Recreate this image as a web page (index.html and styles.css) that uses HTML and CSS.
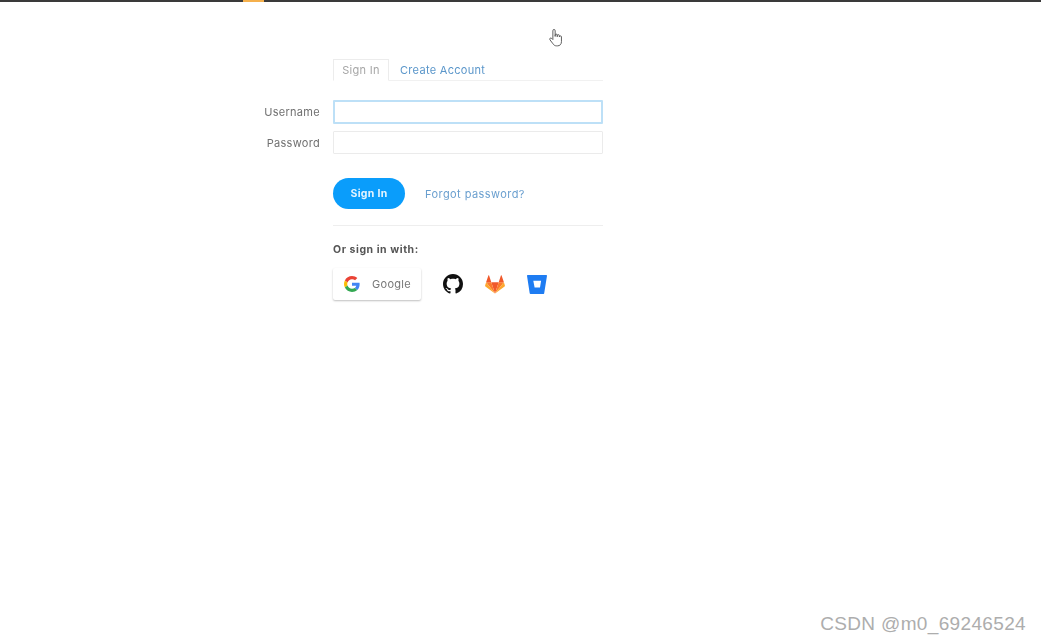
FILE: index.html
```html
<!DOCTYPE html>
<html lang="en">
<head>
<meta charset="utf-8">
<title>Sign In</title>
<link rel="stylesheet" href="styles.css">
</head>
<body>
<div class="topbar"><span class="topbar-accent"></span></div>
<main class="page">
  <nav class="tabs">
    <a class="tab tab-active">Sign In</a>
    <a class="tab tab-link">Create Account</a>
  </nav>
  <form class="form">
    <label class="field">
      <span class="field-label">Username</span>
      <span class="input input-focus"></span>
    </label>
    <label class="field">
      <span class="field-label">Password</span>
      <span class="input"></span>
    </label>
    <div class="actions">
      <span class="button-primary">Sign In</span>
      <a class="forgot">Forgot password?</a>
    </div>
    <div class="providers">
      <div class="providers-title">Or sign in with:</div>
      <div class="providers-row">
        <span class="google">
          <svg class="icon-g" viewBox="0 0 48 48" width="16" height="16"><path fill="#EA4335" d="M24 9.5c3.5 0 6.700 1.200 9.200 3.600l6.900-6.900C35.900 2.400 30.500 0 24 0 14.600 0 6.500 5.400 2.600 13.200l8 6.200C12.500 13.700 17.800 9.500 24 9.500z"/><path fill="#4285F4" d="M46.900 24.500c0-1.600-.1-3.100-.4-4.500H24v9h12.900c-.6 3-2.200 5.500-4.800 7.200l7.700 6c4.500-4.200 7.100-10.300 7.100-17.700z"/><path fill="#FBBC05" d="M10.500 28.600c-.5-1.400-.8-3-.8-4.600s.3-3.200.8-4.600l-8-6.200C.9 16.500 0 20.100 0 24s.9 7.500 2.600 10.800l7.900-6.200z"/><path fill="#34A853" d="M24 48c6.500 0 11.900-2.100 15.900-5.800l-7.700-6c-2.200 1.400-4.900 2.300-8.200 2.300-6.200 0-11.500-4.200-13.400-9.900l-8 6.200C6.500 42.600 14.600 48 24 48z"/></svg>
          <span class="google-text">Google</span>
        </span>
        <svg class="provider provider-github" viewBox="0 0 16 16" width="20" height="20"><path fill="#111" d="M8 0C3.580 0 0 3.580 0 8c0 3.540 2.290 6.530 5.470 7.590.4.070.55-.17.55-.38 0-.19-.01-.82-.01-1.490-2.010.37-2.530-.49-2.690-.94-.09-.23-.48-.94-.82-1.130-.28-.15-.68-.52-.01-.53.63-.01 1.080.58 1.230.82.720 1.210 1.870.87 2.330.66.070-.52.280-.87.510-1.070-1.780-.2-3.640-.89-3.640-3.950 0-.87.310-1.590.820-2.150-.08-.2-.36-1.020.08-2.120 0 0 .67-.21 2.200.82.640-.18 1.320-.27 2-.27s1.360.09 2 .27c1.530-1.040 2.200-.82 2.200-.82.440 1.100.160 1.920.080 2.120.51.560.820 1.270.820 2.150 0 3.070-1.870 3.750-3.650 3.950.29.250.54.730.54 1.480 0 1.070-.01 1.930-.01 2.200 0 .21.15.46.55.38A8.010 8.010 0 0 0 16 8c0-4.420-3.580-8-8-8z"/></svg>
        <svg class="provider provider-gitlab" viewBox="0 0 20 19" width="20" height="19"><path fill="#F0592B" d="M10 18.500l3.700-11.300H6.300z"/><path fill="#FC7A2A" d="M10 18.500L6.300 7.200H1.100z"/><path fill="#FCA72E" d="M1.100 7.200L.1 10.600c-.1.300 0 .6.300.8L10 18.500z"/><path fill="#F0592B" d="M1.100 7.200h5.200L4.100.5c-.1-.300-.6-.300-.7 0z"/><path fill="#FC7A2A" d="M10 18.500l3.700-11.300h5.200z"/><path fill="#FCA72E" d="M18.900 7.200l1 3.400c.1.300 0 .6-.3.800L10 18.500z"/><path fill="#F0592B" d="M18.900 7.200h-5.200L15.900.5c.1-.300.6-.300.7 0z"/></svg>
        <svg class="provider provider-bitbucket" viewBox="0 0 20 19" width="20" height="19"><path fill="#1E7CF2" fill-rule="evenodd" d="M.6 0C.3 0 0 .3 0 .7l2.700 17.500c.1.400.4.700.8.700h13.100c.3 0 .6-.2.600-.6L20 .7c0-.4-.3-.7-.6-.7zM13 12.500H7.600L6.300 5.800h7.800z"/></svg>
      </div>
    </div>
  </form>
</main>
<svg class="cursor" viewBox="1 0.400 13 17.200" width="14" height="18"><path fill="#fff" stroke="#555" stroke-width="0.9" stroke-linejoin="round" d="M4.500 10.500V2a1.100 1.100 0 0 1 2.200 0v5.500V6.300a1 1 0 0 1 2 0v1.500-1a1 1 0 0 1 2 0v1.200a1 1 0 0 1 2 0v4.500c0 2.500-1.500 4-3.800 4H8c-1.600 0-2.500-.7-3.400-2L1.700 10.700c-.8-1.200.7-2.300 1.700-1.300z"/></svg>
<div class="watermark">CSDN @m0_69246524</div>
</body>
</html>
```
FILE: styles.css
```css
html, body {
  margin: 0;
  height: 100%;
  background: #fff;
  overflow: hidden;
}

body {
  font-family: Inter, "Open Sans", sans-serif;
  color: #666;
  position: relative;
}

.topbar {
  height: 2px;
  background: #3a3a3a;
  padding-left: 243px;
}

.topbar-accent {
  display: block;
  width: 21px;
  height: 2px;
  background: #f5b04c;
}

.page {
  padding-top: 57px;
  width: 603px;
  filter: blur(0.4px);
}

.tabs {
  display: flex;
  margin-left: 333px;
  height: 21px;
  border-bottom: 1px solid #f1f1f1;
  font-size: 11px;
  letter-spacing: 0.3px;
}

.tab {
  display: flex;
  align-items: center;
  box-sizing: border-box;
  height: 22px;
}

.tab-active {
  width: 56px;
  justify-content: center;
  color: #a6a6a6;
  background: #fff;
  border: 1px solid #ececec;
  border-bottom-color: #fff;
}

.tab-link {
  margin-left: 11px;
  color: #5a96ca;
}

.form {
  display: block;
  margin-top: 19px;
}

.field {
  display: flex;
  align-items: center;
  margin-bottom: 7px;
}

.field-label {
  width: 320px;
  text-align: right;
  font-size: 11px;
  letter-spacing: 0.3px;
  color: #707070;
}

.input {
  display: block;
  box-sizing: border-box;
  margin-left: 13px;
  width: 270px;
  height: 23px;
  background: #fff;
  border: 1px solid #ebebeb;
  border-radius: 1px;
}

.input-focus {
  border: 2px solid #bde0f7;
  height: 24px;
}

.actions {
  display: flex;
  align-items: center;
  margin: 24px 0 0 333px;
  padding-bottom: 16px;
  border-bottom: 1px solid #eeeeee;
}

.button-primary {
  display: flex;
  align-items: center;
  justify-content: center;
  width: 72px;
  height: 31px;
  border-radius: 16px;
  background: #0a9dfb;
  color: #e6f5ff;
  font-size: 10.500px;
  font-weight: 700;
  letter-spacing: 0.3px;
}

.forgot {
  margin-left: 20px;
  color: #6a9fcf;
  font-size: 11px;
  letter-spacing: 0.43px;
}

.providers {
  margin-left: 333px;
}

.providers-title {
  margin-top: 17px;
  font-size: 10.500px;
  line-height: 14px;
  font-weight: 700;
  letter-spacing: 0.56px;
  color: #555;
}

.providers-row {
  display: flex;
  align-items: center;
  margin-top: 11px;
}

.google {
  display: flex;
  align-items: center;
  box-sizing: border-box;
  width: 88px;
  height: 32px;
  padding-left: 11px;
  background: #fff;
  border-radius: 2px;
  box-shadow: 0 1px 2px rgba(0, 0, 0, 0.25);
}

.google-text {
  margin-left: 12px;
  font-size: 11px;
  letter-spacing: 0.3px;
  color: #777;
}

.provider {
  display: block;
}

.provider-github {
  margin-left: 22px;
}

.provider-gitlab {
  margin-left: 22px;
}

.provider-bitbucket {
  margin-left: 22px;
}

.cursor {
  position: absolute;
  left: 549px;
  top: 29px;
  filter: blur(0.3px);
}

.watermark {
  position: absolute;
  right: 15px;
  top: 614px;
  font-family: "Liberation Sans", sans-serif;
  font-size: 19px;
  line-height: 20px;
  color: #adadad;
  letter-spacing: 0.35px;
}
```
